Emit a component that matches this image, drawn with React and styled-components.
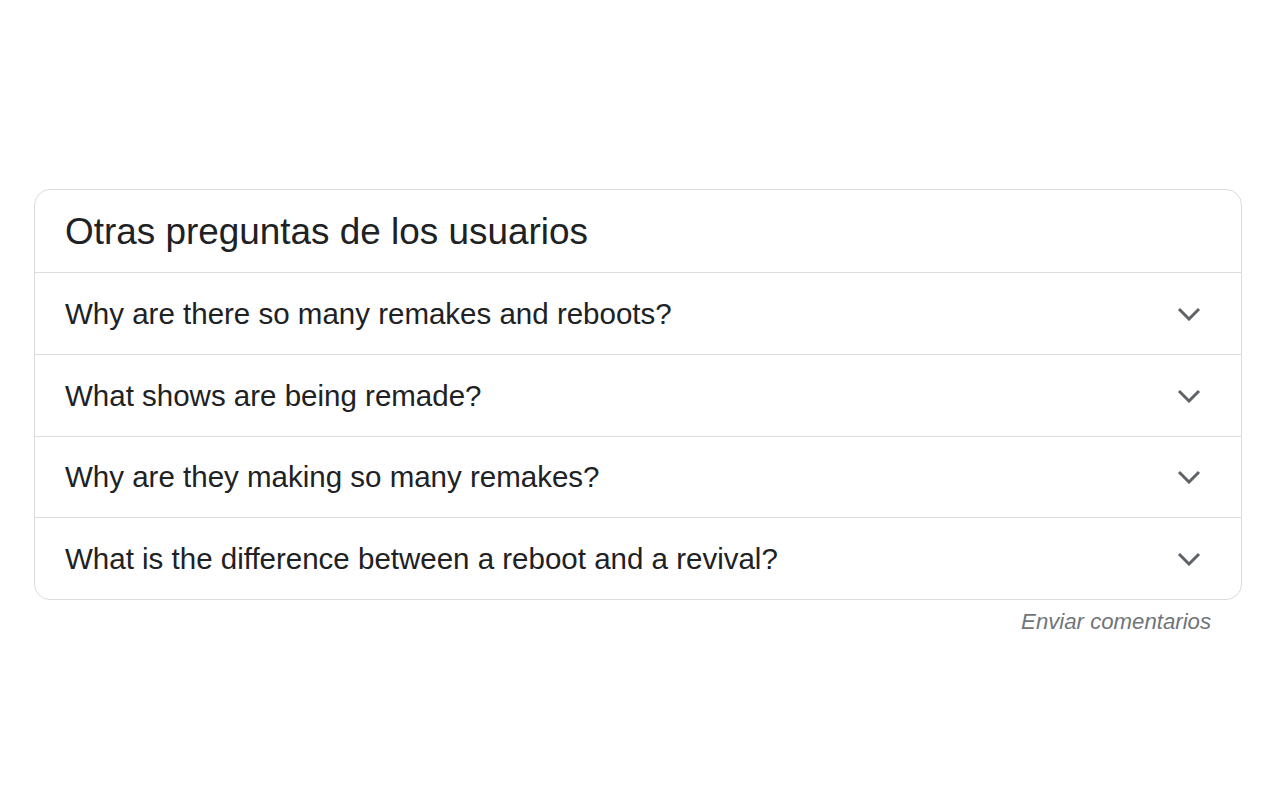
import React from "react";
import styled, { createGlobalStyle } from "styled-components";

const Global = createGlobalStyle`
  html, body { margin: 0; padding: 0; background: #fff; }
  body { font-family: "Liberation Sans", Arial, sans-serif; }
`;

const Page = styled.div`
  width: 1280px;
  height: 800px;
  box-sizing: border-box;
  padding: 189px 38px 0 34px;
`;

const Card = styled.div`
  border: 1px solid #dadce0;
  border-radius: 16px;
  overflow: hidden;
`;

const Header = styled.div`
  height: 83px;
  box-sizing: border-box;
  display: flex;
  align-items: center;
  padding: 0 30px;
  border-bottom: 1px solid #dadce0;
`;

const Title = styled.h2`
  margin: 0;
  font-weight: 400;
  font-size: 36.9px;
  color: #202124;
  line-height: 1;
  padding-top: 2px;
`;

const Row = styled.div`
  height: ${(p) => p.$h}px;
  box-sizing: border-box;
  display: flex;
  align-items: center;
  justify-content: space-between;
  padding: 0 40px 0 30px;
  border-top: ${(p) => (p.$first ? "none" : "1px solid #dadce0")};
`;

const Question = styled.span`
  font-size: 29.5px;
  color: #202124;
  line-height: 1;
`;

const Chevron = styled.svg`
  width: 24px;
  height: 14px;
  display: block;
`;

const Footer = styled.div`
  display: flex;
  justify-content: flex-end;
  padding: 9px 31px 0 0;
`;

const Feedback = styled.span`
  font-size: 22.2px;
  font-style: italic;
  color: #70757a;
`;

const questions = [
  "Why are there so many remakes and reboots?",
  "What shows are being remade?",
  "Why are they making so many remakes?",
  "What is the difference between a reboot and a revival?",
];
const heights = [81, 82, 81, 82];

export default function App() {
  return (
    <>
      <Global />
      <Page>
        <Card>
          <Header>
            <Title>Otras preguntas de los usuarios</Title>
          </Header>
          {questions.map((q, i) => (
            <Row key={i} $first={i === 0} $h={heights[i]}>
              <Question>{q}</Question>
              <Chevron viewBox="0 0 24 14">
                <path d="M2 2 L12 12 L22 2" fill="none" stroke="#5f6368" strokeWidth="3" strokeLinecap="butt" />
              </Chevron>
            </Row>
          ))}
        </Card>
        <Footer>
          <Feedback>Enviar comentarios</Feedback>
        </Footer>
      </Page>
    </>
  );
}
